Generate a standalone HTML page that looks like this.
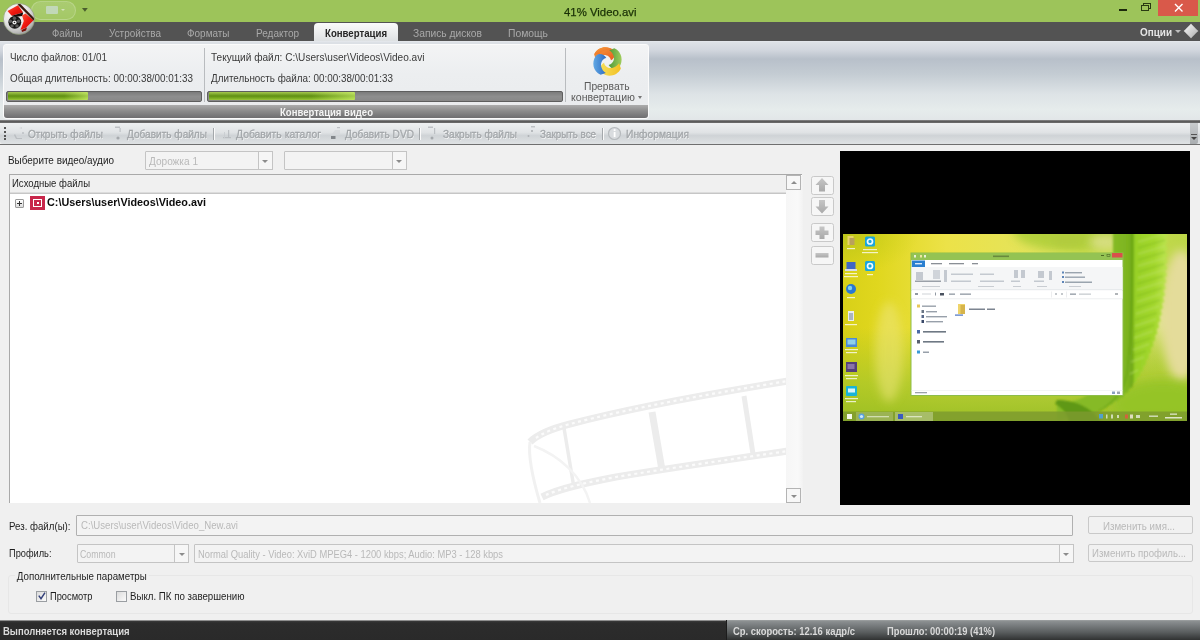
<!DOCTYPE html>
<html lang="ru">
<head>
<meta charset="utf-8">
<title>41% Video.avi</title>
<style>
*{box-sizing:border-box;margin:0;padding:0}
html,body{width:1200px;height:640px;overflow:hidden;background:#f0f0f0}
body{position:relative;font-family:"Liberation Sans",sans-serif;font-size:11px;color:#222}
.a{position:absolute}
.t{position:absolute;white-space:nowrap;transform-origin:0 50%;line-height:14px;height:14px;font-size:11px}
.b{font-weight:bold}
/* title */
#title{left:0;top:0;width:1200px;height:21.5px;z-index:0;background:#9dc45a}
#tabs{left:0;top:21px;width:1200px;height:20px;background:#535353}
.tab{color:#a9a9a9}
#atab{left:314px;top:23px;width:84px;height:19px;border-radius:4px 4px 0 0;background:linear-gradient(#fafafa,#e9ebec 60%,#dcdfe1)}
/* ribbon */
#ribbon{left:0;top:41px;width:1200px;height:79px;background:linear-gradient(#e6e9ed 0,#dde1e6 1.5px,#d2d7de 9px,#b8c0ca 18px,#c4ccd3 33px,#dde3e6 53px,#e6ecec 69px,#e2e6e8 79px)}
#rgroup{left:3px;top:44px;width:646px;height:75px;border:1px solid #fbfbfb;border-radius:3px;background:linear-gradient(#f3f4f5,#eceef0 40%,#e9ebed)}
#rcap{left:4px;top:105px;width:644px;height:13px;border-radius:0 0 3px 3px;background:linear-gradient(#adadad,#8c8c8c 45%,#6e6e70)}
.vsep{width:1px;background:#b9bcbf}
.pbar{height:11px;border:1px solid #5e5e5e;border-radius:2px;background:linear-gradient(#7c7c7c,#8e8e8e 50%,#888)}
.pfill{top:92px;height:8px;border-radius:1px;background:linear-gradient(90deg,rgba(255,255,255,0) 70%,rgba(220,255,120,.55) 100%),linear-gradient(#a6c84e,#5f8f12 50%,#7fae24 80%,#9cc63c)}
#rline{left:0;top:120px;width:1200px;height:3px;background:linear-gradient(#8a8a8a,#5c5c5c 50%,#6e6e6e)}
/* toolbar */
#tbar{left:0;top:123px;width:1200px;height:21px;background:linear-gradient(#eef0f1,#e0e3e5 45%,#cfd3d6 60%,#dfe2e4);border-radius:3px 0 0 3px}
#tline{left:0;top:144px;width:1200px;height:1px;background:#6f6f6f}
.tb{color:#a3a7aa;text-shadow:.5px 1px 0 rgba(255,255,255,.9);-webkit-text-stroke:.35px #a3a7aa}
.tsep{top:128px;width:2px;height:12px;background:linear-gradient(90deg,#a4a8ab 50%,#fafafa 50%)}
/* main */
.lbl{color:#1e1e1e}
.dis{color:#b9b9b9}
.combo{height:18px;border:1px solid #c4c4c4;background:#f3f3f3;border-radius:1px}
.cbtn{width:15px;height:18px;border:1px solid #c4c4c4;background:#f6f6f6}
.arr{width:0;height:0;border-left:3px solid transparent;border-right:3px solid transparent;border-top:3px solid #8c8c8c}
#list{left:9px;top:174px;width:793px;height:328.5px;border:1px solid #a9a9a9;border-right:none;border-bottom:none;background:#fff}
#lhead{left:10px;top:175px;width:776px;height:19px;background:linear-gradient(#f0f0f0 17px,#dcdcdc 17px,#dcdcdc 17.5px,#c6c6c6 17.5px)}
#sbar{left:785.5px;top:176px;width:17px;height:326.5px;background:linear-gradient(90deg,#f6f6f6,#f9f9f9 70%,#f2f2f2)}
.sbtn{left:785.5px;width:15.5px;height:15px;border:1px solid #b4b4b4;background:#f7f7f7}
.sq{left:811px;width:22.5px;height:19px;border:1px solid #c9c9c9;border-radius:2.5px;background:#f6f6f6}
#prev{left:840px;top:151px;width:350px;height:354px;background:#000}
.btn{height:18px;border:1px solid #c9c9c9;border-radius:2px;background:#f1f1f1}
.chk{width:11px;height:11px;border:1px solid #9a9ea2;background:linear-gradient(135deg,#dcdcdc,#fafafa)}
/* status */
#status{left:0;top:620px;width:1200px;height:20px;background:linear-gradient(#8e8e8e 0,#8e8e8e 1px,#3a3a3a 1px,#2c2c2c 3px,#2a2a2a)}
#status2{left:726px;top:620px;width:474px;height:20px;background:linear-gradient(#a4a7a8 0,#8d9192 1px,#7a7e80 5px,#5b5f60 12px,#303232 20px);border-left:1px solid #1c1c1c}
.st{color:#dadada;font-weight:bold}
</style>
</head>
<body>
<div class="a" id="tabs"></div>
<div class="a" id="title"></div>
<span class="t" style="left:564px;top:4.6px;font-size:11.6px;color:#1a3006;-webkit-text-stroke:.25px #1a3006;transform:scaleX(0.9808)">41% Video.avi</span>
<div class="a" style="left:1119px;top:9px;width:8px;height:2px;background:#1c2a0c"></div>
<div class="a" style="left:1143px;top:3px;width:7.5px;height:6px;border:1px solid #2a3b12;border-top-width:1.5px"></div>
<div class="a" style="left:1141px;top:5px;width:7.5px;height:6px;border:1px solid #2a3b12;border-top-width:1.5px;background:#9dc45a"></div>
<div class="a" style="left:1158px;top:0;width:40px;height:16px;background:#d9594a"></div>
<svg class="a" style="left:1173px;top:2px" width="12" height="12" viewBox="0 0 12 12"><path d="M2 2 L9.5 9.5 M9.500 2 L2 9.500" stroke="#fff" stroke-width="1.400" fill="none"/></svg>
<div class="a" style="left:31px;top:1px;width:45px;height:19px;border-radius:9.5px;border:1px solid rgba(255,255,255,.2);background:linear-gradient(rgba(255,255,255,.14),rgba(255,255,255,.08))"></div>
<div class="a" style="left:46px;top:6px;width:12px;height:8px;background:rgba(215,228,245,.55);border-radius:1px"></div>
<div class="a arr" style="left:61px;top:9px;border-top-color:rgba(230,240,220,.7);border-width:2px 2px 0 2px"></div>
<svg class="a" style="left:81px;top:7px" width="8" height="6" viewBox="0 0 8 6"><path d="M1 1 h5.800 l-2.900 3.800z" fill="#4a5e2e"/></svg>
<span class="t tab" style="left:52px;top:26px;transform:scaleX(0.8726)">Файлы</span>
<span class="t tab" style="left:109px;top:26px;transform:scaleX(0.9036)">Устройства</span>
<span class="t tab" style="left:187px;top:26px;transform:scaleX(0.9046)">Форматы</span>
<span class="t tab" style="left:255.5px;top:26px;transform:scaleX(0.9080)">Редактор</span>
<div class="a" id="atab"></div>
<span class="t b" style="left:325px;top:26px;color:#262626;transform:scaleX(0.8752)">Конвертация</span>
<span class="t tab" style="left:413px;top:26px;transform:scaleX(0.9309)">Запись дисков</span>
<span class="t tab" style="left:507.5px;top:26px;transform:scaleX(0.9412)">Помощь</span>
<span class="t b" style="left:1140px;top:25px;color:#e6e6e6;transform:scaleX(0.9014)">Опции</span>
<div class="a arr" style="left:1175px;top:30px;border-top-color:#bdbdbd;border-left-width:3px;border-right-width:3px"></div>
<svg class="a" style="left:1183px;top:23px" width="16" height="16" viewBox="0 0 16 16"><defs><linearGradient id="dg" x1="0" y1="0" x2="1" y2="1"><stop offset="0" stop-color="#fff"/><stop offset="1" stop-color="#a8a8a8"/></linearGradient></defs><path d="M8 .8 L15.2 8 L8 15.2 L.8 8Z" fill="url(#dg)"/><path d="M8 .8 L8 15.2 M.8 8 L15.2 8" stroke="#d0d0d0" stroke-width=".6" opacity=".6"/></svg>
<div class="a" id="ribbon"></div>
<div class="a" id="rgroup"></div>
<div class="a" id="rcap"></div>
<div class="a" id="rline"></div>
<span class="t" style="left:10px;top:50px;color:#3a3a3a;transform:scaleX(0.8969)">Число файлов: 01/01</span>
<span class="t" style="left:10px;top:71px;color:#3a3a3a;transform:scaleX(0.8966)">Общая длительность: 00:00:38/00:01:33</span>
<div class="a pbar" style="left:6px;top:91px;width:196px"></div>
<div class="a pfill" style="left:7.5px;width:80px"></div>
<div class="a vsep" style="left:204px;top:48px;height:54px"></div>
<span class="t" style="left:211px;top:50px;color:#3a3a3a;transform:scaleX(0.9174)">Текущий файл: C:\Users\user\Videos\Video.avi</span>
<span class="t" style="left:211px;top:71px;color:#3a3a3a;transform:scaleX(0.8965)">Длительность файла: 00:00:38/00:01:33</span>
<div class="a pbar" style="left:207px;top:91px;width:356px"></div>
<div class="a pfill" style="left:208.5px;width:146px"></div>
<div class="a vsep" style="left:565px;top:48px;height:54px"></div>
<span class="t b" style="left:279.5px;top:104.5px;color:#f4f4f4;transform:scaleX(0.8673)">Конвертация видео</span>
<span class="t" style="left:584px;top:79px;color:#5a5a5a;transform:scaleX(0.9357)">Прервать</span>
<span class="t" style="left:571px;top:89.5px;color:#5a5a5a;transform:scaleX(0.9613)">конвертацию</span>
<div class="a arr" style="left:638px;top:96px;border-top-color:#777;border-left-width:2.5px;border-right-width:2.5px"></div>
<svg class="a" style="left:592px;top:47px" width="31" height="30" viewBox="0 0 31 30">
<defs>
<linearGradient id="c1" x1="0" y1="0" x2="1" y2="1"><stop offset="0" stop-color="#f6a03c"/><stop offset="1" stop-color="#e85a20"/></linearGradient>
<linearGradient id="c2" x1="0" y1="0" x2="0" y2="1"><stop offset="0" stop-color="#a0cc5c"/><stop offset="1" stop-color="#4e9a38"/></linearGradient>
<linearGradient id="c3" x1="0" y1="0" x2="1" y2="0"><stop offset="0" stop-color="#f2c024"/><stop offset="1" stop-color="#f6de58"/></linearGradient>
<linearGradient id="c4" x1="0" y1="0" x2="0" y2="1"><stop offset="0" stop-color="#62a8e4"/><stop offset="1" stop-color="#2c6cc4"/></linearGradient>
<filter id="cb" x="-10%" y="-10%" width="120%" height="120%"><feGaussianBlur stdDeviation=".35"/></filter>
</defs>
<g filter="url(#cb)" transform="translate(15.5 14.5) scale(1.16) translate(-15.5 -14.5)">
<path id="arm" d="M4 8.500 C7 2 15 .5 20.500 4.500 C23 7 22 11.500 18.500 13.500 C18 10.500 15 8.500 11.500 9 C9 9.500 7 11 5.500 13 Z" fill="url(#c1)"/>
<path d="M4 8.500 C7 2 15 .5 20.500 4.500 C23 7 22 11.500 18.500 13.500 C18 10.500 15 8.500 11.500 9 C9 9.500 7 11 5.500 13 Z" fill="url(#c2)" transform="rotate(90 15.500 14.500)"/>
<path d="M4 8.500 C7 2 15 .5 20.500 4.500 C23 7 22 11.500 18.500 13.500 C18 10.500 15 8.500 11.500 9 C9 9.500 7 11 5.500 13 Z" fill="url(#c3)" transform="rotate(180 15.500 14.500)"/>
<path d="M4 8.500 C7 2 15 .5 20.500 4.500 C23 7 22 11.500 18.500 13.500 C18 10.500 15 8.500 11.500 9 C9 9.500 7 11 5.500 13 Z" fill="url(#c4)" transform="rotate(270 15.500 14.500)"/>
<path d="M4 8.500 C7 2 15 .5 20.500 4.500 C19 4 13 3 8.500 8 Z" fill="url(#c1)"/>
</g>
</svg>

<svg class="a" style="left:2px;top:2px" width="34" height="34" viewBox="0 0 34 34">
<defs>
<radialGradient id="ab" cx=".38" cy=".3" r=".75"><stop offset="0" stop-color="#ffffff"/><stop offset=".55" stop-color="#e6e6e6"/><stop offset=".85" stop-color="#b9b9b9"/><stop offset="1" stop-color="#8e8e8e"/></radialGradient>
<linearGradient id="ar" x1="0" y1="0" x2="1" y2="1"><stop offset="0" stop-color="#ff5a3c"/><stop offset=".5" stop-color="#f01810"/><stop offset="1" stop-color="#c80c08"/></linearGradient>
<clipPath id="ac"><circle cx="17" cy="17" r="15"/></clipPath>
</defs>
<circle cx="17" cy="17" r="15.600" fill="url(#ab)" stroke="#8a9a70" stroke-width=".6"/>
<g clip-path="url(#ac)">
<path d="M5.500 9 L16 3.200 L21.200 10.500 L9.700 13.800Z" fill="url(#ar)"/>
<path d="M9.700 13.800 L21.200 10.500 L20.300 14 L13 15Z" fill="#1a0806"/>
<path d="M20 13.600 L23.500 11.500 L31.500 18.300 L24 25.800 L18.400 28 L21.800 19Z" fill="url(#ar)"/>
<path d="M15.500 2.500 L18 1.500 L33 17 L31.500 18.500Z" fill="#3a1a10"/>
<path d="M19.500 28 L25 25.500 L24 28.500 L20 30Z" fill="#7a1008"/>
</g>
<circle cx="12.800" cy="20.300" r="6.400" fill="#141414"/>
<g fill="#5a5a5a"><circle cx="12.500" cy="16.300" r="1.700"/><circle cx="16.500" cy="19.200" r="1.700"/><circle cx="15" cy="23.900" r="1.700"/><circle cx="10" cy="23.900" r="1.700"/><circle cx="8.500" cy="19.200" r="1.700"/></g>
<circle cx="12.500" cy="20.500" r="2.100" fill="#f2f2f2"/><circle cx="12.500" cy="20.500" r=".8" fill="#222"/>
</svg>

<div class="a" id="tbar"></div>
<div class="a" id="tline"></div>
<div class="a" style="left:4px;top:127px;width:2px;height:2px;background:#555;box-shadow:0 4px 0 #555,0 8px 0 #555,0 11px 0 #555"></div>
<span class="t tb" style="left:28px;top:126.6px;transform:scaleX(0.9157)">Открыть файлы</span>
<span class="t tb" style="left:127px;top:126.6px;transform:scaleX(0.9162)">Добавить файлы</span>
<div class="a tsep" style="left:213px"></div>
<span class="t tb" style="left:236px;top:126.6px;transform:scaleX(0.9412)">Добавить каталог</span>
<span class="t tb" style="left:344.5px;top:126.6px;transform:scaleX(0.9212)">Добавить DVD</span>
<div class="a tsep" style="left:419px"></div>
<span class="t tb" style="left:442.5px;top:126.6px;transform:scaleX(0.9129)">Закрыть файлы</span>
<span class="t tb" style="left:540px;top:126.6px;transform:scaleX(0.8922)">Закрыть все</span>
<div class="a tsep" style="left:602px"></div>
<span class="t tb" style="left:625.5px;top:126.6px;transform:scaleX(0.9353)">Информация</span>
<svg class="a" style="left:0;top:123px" width="700" height="21" viewBox="0 0 700 21">
<g fill="#b4b8bc" opacity=".8">
<path d="M14 12 L16 16 L22 16 L22 15 L17 15 L15 11Z"/><circle cx="23" cy="10" r="1"/><path d="M19 5 L22 4 L22 6Z" fill="#d0d3d6"/>
<rect x="115" y="3.500" width="5" height="1.500" /><circle cx="118" cy="15" r="1.600" fill="#9a9ea2"/><rect x="119.500" y="5" width="1.200" height="4"/>
<rect x="223" y="14" width="8" height="1.200"/><rect x="228" y="7" width="1.200" height="8"/><rect x="224" y="9" width="1" height="6" fill="#c8ccd0"/>
<path d="M331 12 L335 7 L340 7 L340 12Z" fill="#d6d9dc"/><rect x="331" y="13" width="4.500" height="3" fill="#6f7378"/><rect x="337" y="4" width="3" height="1.200"/>
<rect x="428" y="3.500" width="5" height="1.500"/><circle cx="432" cy="15" r="1.500" fill="#9a9ea2"/><rect x="434" y="5" width="1.200" height="6"/>
<rect x="531" y="3" width="4" height="1.500"/><circle cx="532" cy="8" r="1" fill="#9a9ea2"/><circle cx="528.500" cy="13" r="1" fill="#a4a8ac"/>
</g>
<circle cx="614.500" cy="10.500" r="6" fill="#d9dcdf" stroke="#b6babd" stroke-width="1.200"/>
<rect x="613.700" y="9" width="1.800" height="5" fill="#fff"/><rect x="613.700" y="6.200" width="1.800" height="1.800" fill="#fff"/>
<path d="M1191 12 h6 l-3 3z" fill="#666"/>
</svg>
<div class="a" style="left:1190px;top:123px;width:8px;height:21px;background:linear-gradient(#c9ccce,#a9adb0);border-radius:0 0 2px 0"></div>
<div class="a" style="left:1191px;top:134px;width:6px;height:1px;background:#555"></div>
<div class="a arr" style="left:1191px;top:137px;border-top-color:#444"></div>

<span class="t lbl" style="left:8px;top:152.5px;transform:scaleX(0.9028)">Выберите видео/аудио</span>
<div class="a combo" style="left:145px;top:151px;width:127px;height:19px"></div>
<div class="a cbtn" style="left:258px;top:151px;height:19px"></div>
<div class="a arr" style="left:262px;top:159.5px"></div>
<span class="t dis" style="left:149px;top:153.5px;transform:scaleX(0.9156)">Дорожка 1</span>
<div class="a combo" style="left:284px;top:151px;width:123px;height:19px"></div>
<div class="a cbtn" style="left:392px;top:151px;height:19px"></div>
<div class="a arr" style="left:396px;top:159.5px"></div>
<div class="a" id="list"></div>
<svg class="a" style="left:520px;top:376px" width="266" height="127" viewBox="0 0 266 127">
<defs><filter id="fb" x="-5%" y="-5%" width="110%" height="110%"><feGaussianBlur stdDeviation=".7"/></filter></defs>
<g filter="url(#fb)" fill="none" stroke="#ececec">
<path d="M10 66 C18 58 34 52 50 48 C110 32 200 16 268 5" stroke-width="7"/>
<path d="M22 121 C40 112 70 106 96 101 C150 92 220 82 268 75" stroke-width="7"/>
<path d="M44 52 L54 112" stroke-width="3.500"/>
<path d="M132 36 L142 94" stroke-width="7"/>
<path d="M224 20 L233 78" stroke-width="5"/>
<path d="M10 66 C8 80 12 100 20 127" stroke-width="3" stroke="#f1f1f1"/>
<path d="M14 70 C40 80 62 100 70 127" stroke-width="2.500" stroke="#f3f3f3"/>
</g>
<g stroke="#fbfbfb" stroke-width="2.200" stroke-dasharray="3 3.500" fill="none">
<path d="M16 62 C24 56 36 52 50 48 C110 32 200 16 268 5"/>
<path d="M26 119 C44 111 70 106 96 101 C150 92 220 82 268 75"/>
</g>
</svg>

<div class="a" id="lhead"></div>
<div class="a" id="sbar"></div>
<div class="a sbtn" style="top:175px"></div>
<div class="a arr" style="left:790.5px;top:181px;border-top:none;border-bottom:3px solid #8c8c8c"></div>
<div class="a sbtn" style="top:488px"></div>
<div class="a arr" style="left:790.5px;top:494.5px"></div>
<span class="t lbl" style="left:12px;top:176px;transform:scaleX(0.8679)">Исходные файлы</span>
<div class="a" style="left:14.5px;top:199px;width:9px;height:9px;border:1px solid #9a9a9a;border-radius:1px;background:linear-gradient(#fff,#dcdcdc)"></div>
<div class="a" style="left:16.5px;top:203px;width:5px;height:1px;background:#333"></div>
<div class="a" style="left:18.5px;top:201px;width:1px;height:5px;background:#333"></div>
<div class="a" style="left:30px;top:196px;width:15px;height:14px;background:#c8274b"></div>
<div class="a" style="left:33px;top:199px;width:9px;height:8px;border:1px solid #fff"></div>
<div class="a" style="left:36.5px;top:202px;width:2px;height:2px;background:#fff"></div>
<span class="t b" style="left:46.5px;top:195px;font-size:11.5px;color:#0c0c0c;transform:scaleX(0.9410)">C:\Users\user\Videos\Video.avi</span>
<div class="a sq" style="top:175.5px"></div>
<div class="a sq" style="top:197.3px"></div>
<div class="a sq" style="top:223px"></div>
<div class="a sq" style="top:245.5px"></div>
<svg class="a" style="left:811px;top:175px" width="23" height="91" viewBox="0 0 23 91">
<defs><linearGradient id="sg" x1="0" y1="0" x2="0" y2="1"><stop offset="0" stop-color="#c6c6c6"/><stop offset="1" stop-color="#a9a9a9"/></linearGradient></defs>
<path d="M11 3 L17.500 10 L14 10 L14 16.500 L8 16.500 L8 10 L4.500 10Z" fill="url(#sg)"/>
<path d="M11 38.500 L17.500 31.500 L14 31.500 L14 25 L8 25 L8 31.500 L4.500 31.500Z" fill="url(#sg)"/>
<path d="M8.500 51.500 L13.500 51.500 L13.500 55.500 L17.500 55.500 L17.500 60 L13.500 60 L13.500 64 L8.500 64 L8.500 60 L4.500 60 L4.500 55.500 L8.500 55.500Z" fill="url(#sg)"/>
<rect x="4.500" y="78" width="13" height="4.500" fill="url(#sg)"/>
</svg>

<div class="a" id="prev"></div>
<svg class="a" style="left:843px;top:234px" width="344" height="187" viewBox="0 0 344 187">
<defs>
<linearGradient id="wp1" x1="0" y1="0" x2="1" y2="0"><stop offset="0" stop-color="#d8d018"/><stop offset=".1" stop-color="#e0d71e"/><stop offset=".3" stop-color="#ece248"/><stop offset=".6" stop-color="#e2e460"/><stop offset=".8" stop-color="#c8dc50"/><stop offset="1" stop-color="#bcd648"/></linearGradient>
<linearGradient id="wp2" x1="0" y1="0" x2="0" y2="1"><stop offset="0" stop-color="#a4c428" stop-opacity="0"/><stop offset=".5" stop-color="#a4c428" stop-opacity="0"/><stop offset=".8" stop-color="#a6c62a" stop-opacity=".75"/><stop offset="1" stop-color="#98be24" stop-opacity=".95"/></linearGradient>
<radialGradient id="wp3" cx="0" cy="0" r=".22"><stop offset="0" stop-color="#bcc41c"/><stop offset="1" stop-color="#c8d018" stop-opacity="0"/></radialGradient>
<radialGradient id="wp4" cx=".97" cy=".45" r=".3"><stop offset="0" stop-color="#e8e8a0"/><stop offset="1" stop-color="#d8e070" stop-opacity="0"/></radialGradient>
<linearGradient id="lf" gradientUnits="userSpaceOnUse" x1="270" y1="0" x2="322" y2="0"><stop offset="0" stop-color="#86ba26"/><stop offset=".3" stop-color="#7cb41e"/><stop offset=".37" stop-color="#6ea618"/><stop offset=".42" stop-color="#98d026"/><stop offset=".8" stop-color="#a4d82e"/><stop offset="1" stop-color="#b8e24a"/></linearGradient>
<filter id="bl1" x="-20%" y="-20%" width="140%" height="140%"><feGaussianBlur stdDeviation="1.2"/></filter>
<filter id="bl3" x="-20%" y="-20%" width="140%" height="140%"><feGaussianBlur stdDeviation="5"/></filter>
<clipPath id="vf"><rect width="344" height="187"/></clipPath>
</defs>
<g clip-path="url(#vf)">
<rect width="344" height="187" fill="url(#wp1)"/>
<rect width="344" height="187" fill="url(#wp3)"/>
<rect width="344" height="187" fill="url(#wp4)"/>
<ellipse cx="230" cy="-4" rx="60" ry="22" fill="#a8cc34" filter="url(#bl3)" opacity=".8"/>
<rect width="344" height="187" fill="url(#wp2)"/>
<ellipse cx="46" cy="118" rx="14" ry="50" fill="#eee67c" filter="url(#bl3)" opacity=".55"/>
<ellipse cx="338" cy="82" rx="20" ry="66" fill="#e4dc9a" filter="url(#bl3)"/><ellipse cx="262" cy="8" rx="16" ry="8" fill="#e2e294" filter="url(#bl3)" opacity=".8"/><ellipse cx="225" cy="6" rx="18" ry="6" fill="#b0c440" filter="url(#bl3)" opacity=".5"/>
<ellipse cx="320" cy="170" rx="50" ry="24" fill="#94c428" filter="url(#bl3)" opacity=".9"/>
<g filter="url(#bl1)">
<path d="M270 -3 L322 -3 L324.7 2.2 L322.1 3.6 L324.8 8.8 L322.3 10.1 L324.9 15.3 L322.4 16.7 L324.9 21.9 L322.4 23.2 L324.6 28.6 L322.1 29.8 L324.4 35.1 L321.9 36.3 L324.0 41.7 L321.6 42.9 L323.4 48.3 L321.0 49.4 L322.8 54.9 L320.4 56.0 L322.1 61.4 L319.7 62.5 L321.2 68.0 L318.8 69.0 L320.0 74.5 L317.6 75.4 L318.8 81.0 L316.5 81.9 L317.6 87.5 L315.3 88.3 L316.0 93.9 L313.6 94.7 L314.3 100.3 L312.0 101.1 L312.3 106.7 L310.1 107.3 L310.3 112.9 L308.0 113.5 L308.0 119.1 L305.8 119.7 L305.5 125.3 L303.3 125.8 L302.8 131.3 L300.6 131.8 L299.9 137.3 L297.7 137.6 L296.5 143.0 L294.3 143.3 L292.9 148.6 L290.7 148.8 L289.0 154.0 L286.9 154.1 L284.4 159.0 L282.3 158.8 L279.6 163.5 L277.6 163.3 L274.1 167.5 L272.1 166.9 L268.6 171.1 L266.6 170.6 L262.5 174.1 L260.7 173.3 L256.5 176.8 L254.7 175.9 L250.4 179.2 L248.6 178.4 L243.9 181.2 L242.3 180.2 L237.6 182.9 L236.0 182.0 L214 187 L214 170 C236 168 254 160 262 140 C270 110 270 50 270 -3 Z" fill="url(#lf)"/>
<path d="M214 166 C230 166 248 172 258 188 L226 188 C224 180 220 174 212 170Z" fill="#5e9812"/>
<path d="M289.500 -3 C290 40 289 90 284 140 C280 158 268 172 250 180" stroke="#5c9c10" stroke-width="1.400" fill="none" opacity=".6"/>
<g stroke="#c4e670" stroke-width="1.300" opacity=".6" fill="none">
<path d="M295 8 L321 0M295 20 L322 12M295 32 L322 24M295 44 L321 36M294 56 L320 48M294 68 L318 60M293 80 L316 72M292 92 L313 85M291 104 L310 97M290 116 L306 110M288 128 L301 123M287 140 L295 136"/>
</g>
<g stroke="#6aa814" stroke-width="1" opacity=".5" fill="none">
<path d="M295 14 L322 6M295 26 L322 18M295 38 L321 30M294 50 L320 42M294 62 L319 54M293 74 L317 66M292 86 L314 79M291 98 L311 91M290 110 L308 104M289 122 L303 117"/>
</g>
</g>
<g>
<rect x="4.500" y="2" width="6" height="9" fill="#e8d46a"/><rect x="6.500" y="4" width="5" height="7" fill="#b9a15c"/>
<rect x="22" y="2.500" width="10" height="10" rx="1.500" fill="#19a6dc"/><circle cx="27" cy="7.500" r="2.500" fill="none" stroke="#f0fafe" stroke-width="1.700"/>
<rect x="22" y="27" width="10" height="10" rx="1.500" fill="#19a6dc"/><circle cx="27" cy="32" r="2.500" fill="none" stroke="#f0fafe" stroke-width="1.700"/>
<rect x="3.500" y="28" width="9" height="7" fill="#3f66c4"/><rect x="2" y="35" width="12" height="2" fill="#d8dce8"/>
<circle cx="8" cy="55" r="5" fill="#2a78d2"/><circle cx="7" cy="54" r="2.200" fill="#7fd0f0"/>
<rect x="5" y="77" width="6" height="10" fill="#e9ecef"/><rect x="6" y="79" width="4" height="7" fill="#aab4c0"/>
<rect x="3" y="104" width="11" height="9" fill="#4a8ad6"/><rect x="4.500" y="105.500" width="8" height="5" fill="#8fd0ea"/>
<rect x="3" y="128" width="11" height="10" fill="#54407a"/><rect x="4.500" y="130" width="7" height="5" fill="#8a74a8"/>
<rect x="3" y="152" width="11" height="10" rx="1" fill="#18b4d8"/><rect x="5" y="154.500" width="7" height="4" fill="#d8f4fa"/>
<g fill="#fff" opacity=".75"><rect x="4" y="14" width="8" height="1.200"/><rect x="20" y="15" width="14" height="1.200"/><rect x="19" y="18" width="16" height="1.200"/><rect x="2" y="39" width="12" height="1.200"/><rect x="1" y="42" width="14" height="1.200"/><rect x="24" y="40" width="6" height="1.200"/><rect x="4" y="63" width="8" height="1.200"/><rect x="2" y="90" width="12" height="1.200"/><rect x="2" y="115" width="13" height="1.200"/><rect x="3" y="118" width="11" height="1.200"/><rect x="2" y="141" width="13" height="1.200"/><rect x="3" y="144" width="11" height="1.200"/><rect x="2" y="164" width="13" height="1.200"/><rect x="3" y="167" width="10" height="1.200"/></g>
</g>
<rect x="67.500" y="18.500" width="213" height="143.500" fill="#8dbd49"/>
<rect x="68.500" y="26" width="211" height="135" fill="#ffffff"/>
<rect x="68.500" y="19" width="211" height="7" fill="#94c353"/>
<rect x="269" y="19" width="10.500" height="4.500" fill="#d9504a"/>
<rect x="258" y="21" width="3" height="1" fill="#4d6a24"/><rect x="264" y="20.500" width="3" height="2" fill="none" stroke="#4d6a24" stroke-width=".6"/>
<rect x="150" y="21.500" width="16" height="1.600" fill="#5d7a38" opacity=".8"/>
<rect x="71" y="21" width="2" height="2.500" fill="#e8f0d8"/><rect x="77" y="21" width="2" height="2.500" fill="#f0e8a0"/><rect x="81" y="21" width="2" height="2.500" fill="#e8f0d8"/>
<rect x="69" y="26.500" width="13" height="6.500" fill="#2a7fd0"/>
<rect x="72" y="29" width="7" height="1.400" fill="#d8e8f8"/>
<g fill="#8a8f96"><rect x="88" y="29" width="11" height="1.300"/><rect x="106" y="29" width="15" height="1.300"/><rect x="129" y="29" width="6" height="1.300"/></g>
<rect x="68.500" y="33" width="211" height="23" fill="#f5f6f7"/>
<rect x="68.500" y="55.500" width="211" height=".8" fill="#dcdfe3"/>
<g fill="#c4c9d0"><rect x="73" y="38" width="7" height="8"/><rect x="90" y="36" width="7" height="9" fill="#d0d4da"/><rect x="101" y="36" width="3" height="12"/><rect x="108" y="39.500" width="22" height="1.500"/><rect x="108" y="46.500" width="20" height="1.500"/><rect x="137" y="39.500" width="14" height="1.500"/><rect x="137" y="46.500" width="24" height="1.500"/><rect x="171" y="36" width="4" height="8"/><rect x="178" y="36" width="4" height="8"/><rect x="168" y="46.500" width="9" height="1.500"/><rect x="195" y="37" width="6" height="7"/><rect x="206" y="37" width="3" height="9"/><rect x="191" y="46.500" width="10" height="1.500"/><rect x="72" y="46.500" width="26" height="1.500" fill="#9aa0a8"/></g>
<g fill="#9aa4ae"><rect x="222" y="38" width="17" height="1.400"/><rect x="222" y="42.500" width="20" height="1.400"/><rect x="222" y="47.500" width="27" height="1.500"/></g>
<g fill="#5f86b8"><rect x="219" y="37.500" width="2" height="2"/><rect x="219" y="42" width="2" height="2"/><rect x="219" y="47" width="2" height="2"/></g>
<g fill="#c9cdd2"><rect x="79" y="52" width="18" height="1"/><rect x="135" y="52" width="16" height="1"/><rect x="170" y="52" width="8" height="1"/><rect x="194" y="52" width="10" height="1"/><rect x="226" y="52" width="12" height="1"/></g>
<rect x="68.500" y="56.500" width="211" height="8" fill="#fff"/>
<g fill="#9098a2"><rect x="72" y="59" width="3" height="2"/><rect x="79" y="59.500" width="9" height="1" fill="#d0d4d8"/><rect x="92" y="58.500" width="1" height="3"/><rect x="97" y="59" width="4" height="2.500" fill="#4a5260"/><rect x="106" y="59.500" width="6" height="1.300"/><rect x="117" y="59.500" width="11" height="1.300"/><rect x="212" y="59" width="2" height="2" fill="#c4c8cc"/><rect x="218" y="59" width="2" height="2" fill="#c4c8cc"/><rect x="227" y="59.500" width="6" height="1.300"/><rect x="236" y="59.500" width="12" height="1.300" fill="#c8ccd0"/><rect x="272" y="59" width="3" height="2" fill="#b0b4b8"/></g>
<rect x="208" y="57.500" width=".6" height="6" fill="#e0e2e5"/><rect x="223" y="57.500" width=".6" height="6" fill="#e0e2e5"/>
<rect x="68.500" y="64.500" width="211" height=".7" fill="#e6e8ea"/>
<g fill="#98a0aa"><rect x="79" y="71.500" width="14" height="1.400"/><rect x="83" y="77" width="11" height="1.400"/><rect x="83" y="82" width="21" height="1.400"/><rect x="83" y="87" width="17" height="1.400"/><rect x="80" y="97" width="23" height="1.600" fill="#6e7884"/><rect x="80" y="107" width="21" height="1.600" fill="#6e7884"/><rect x="80" y="117.500" width="6" height="1.500"/></g>
<g><rect x="74" y="70.500" width="3" height="3" fill="#e8c85a"/><rect x="78.500" y="76" width="2.500" height="3" fill="#6a7686"/><rect x="78.500" y="81" width="2.500" height="3" fill="#5a6a8a"/><rect x="78.500" y="86" width="2.500" height="3" fill="#3a4a6a"/><rect x="74" y="96" width="3" height="3.500" fill="#4a6aa8"/><rect x="74" y="106" width="3" height="3.500" fill="#586070"/><rect x="74" y="116.500" width="3" height="3" fill="#3a9ad8"/></g>
<rect x="115" y="70" width="7" height="10" fill="#efd46a"/><rect x="117.500" y="71" width="4.500" height="9" fill="#d6b44c"/><rect x="112" y="80.500" width="8" height="1.200" fill="#4a72c0"/>
<g fill="#7c8490"><rect x="126" y="74.500" width="16" height="1.500"/><rect x="144" y="74.500" width="8" height="1.500"/></g>
<rect x="68.500" y="156" width="211" height=".6" fill="#eceef0"/>
<rect x="72" y="158" width="12" height="1.300" fill="#9aa2aa"/><rect x="269" y="157.500" width="3" height="2.500" fill="#8aa0c0"/><rect x="274" y="157.500" width="3" height="2.500" fill="#9aa4b0"/>
<rect x="0" y="177.500" width="344" height="9.500" fill="#7c9a2e" opacity=".82"/>
<rect x="4" y="180" width="5" height="5" fill="#f4f8ea"/>
<rect x="13" y="178" width="37" height="9" fill="#a3ba62" opacity=".75"/>
<circle cx="18.500" cy="182.500" r="3" fill="#5aa0e0"/><circle cx="18.500" cy="182.500" r="1.600" fill="#cfe8f8"/>
<rect x="24" y="182" width="22" height="1.300" fill="#dfe8c8" opacity=".8"/>
<rect x="52" y="178" width="38" height="9" fill="#b0c478" opacity=".8"/>
<rect x="55" y="180" width="5" height="5" fill="#3a5ac0"/><rect x="63" y="182" width="16" height="1.300" fill="#e4ecd0" opacity=".85"/>
<g opacity=".85"><rect x="256" y="180" width="4" height="4.500" fill="#4aa0e8"/><rect x="263" y="180.500" width="1.500" height="4" fill="#dfe8d0"/><rect x="268" y="180.500" width="2" height="4" fill="#dfe8d0"/><rect x="274" y="181" width="2" height="3" fill="#dfe8d0"/><rect x="282" y="180.500" width="3" height="4" fill="#e05a40"/><rect x="287" y="180.500" width="3" height="4" fill="#f0e8d8"/><rect x="293" y="181" width="4" height="3" fill="#dfe8d0"/><rect x="306" y="181.500" width="9" height="1.400" fill="#e4ecd8"/><rect x="327" y="179.500" width="7" height="1.300" fill="#eef2e4"/><rect x="322" y="183" width="17" height="1.500" fill="#eef2e4"/></g>
</g>
</svg>

<span class="t lbl" style="left:8.5px;top:518.5px;transform:scaleX(0.8797)">Рез. файл(ы):</span>
<div class="a combo" style="left:76px;top:515px;width:997px;height:21px;border-color:#b0b0b0"></div>
<span class="t dis" style="left:81.3px;top:518px;transform:scaleX(0.8753)">C:\Users\user\Videos\Video_New.avi</span>
<div class="a btn" style="left:1088px;top:516px;width:105px"></div>
<span class="t dis" style="left:1103px;top:518.5px;transform:scaleX(0.8833)">Изменить имя...</span>
<span class="t lbl" style="left:8.5px;top:546px;transform:scaleX(0.8408)">Профиль:</span>
<div class="a combo" style="left:77px;top:544px;width:111px;height:19px"></div>
<div class="a cbtn" style="left:174px;top:544px;height:19px"></div>
<div class="a arr" style="left:178.5px;top:553px"></div>
<span class="t dis" style="left:80px;top:546.5px;transform:scaleX(0.7955)">Common</span>
<div class="a combo" style="left:194px;top:544px;width:879px;height:19px"></div>
<div class="a cbtn" style="left:1058.5px;top:544px;height:19px"></div>
<div class="a arr" style="left:1063px;top:553px"></div>
<span class="t dis" style="left:197.5px;top:546.5px;transform:scaleX(0.8503)">Normal Quality - Video: XviD MPEG4 - 1200 kbps; Audio: MP3 - 128 kbps</span>
<div class="a btn" style="left:1088px;top:543.5px;width:105px"></div>
<span class="t dis" style="left:1092px;top:546px;transform:scaleX(0.8753)">Изменить профиль...</span>
<div class="a" style="left:8px;top:575px;width:1185px;height:39px;border:1px solid #e7e7e7;border-radius:3px"></div>
<span class="t lbl" style="left:15px;top:568.7px;background:#f0f0f0;padding:0 2px;transform:scaleX(0.8854)">Дополнительные параметры</span>
<div class="a chk" style="left:36px;top:590.5px"></div>
<svg class="a" style="left:36px;top:590px" width="12" height="12" viewBox="0 0 12 12"><path d="M2.8 5.6 L5 8.6 L9 2.6" stroke="#33407a" stroke-width="1.5" fill="none"/></svg>
<span class="t lbl" style="left:49.5px;top:589px;transform:scaleX(0.8458)">Просмотр</span>
<div class="a chk" style="left:116px;top:590.5px"></div>
<span class="t lbl" style="left:129.5px;top:589px;transform:scaleX(0.8825)">Выкл. ПК по завершению</span>
<div class="a" id="status"></div>
<div class="a" id="status2"></div>
<span class="t st" style="left:2.5px;top:624px;transform:scaleX(0.8619)">Выполняется конвертация</span>
<span class="t st" style="left:732.5px;top:624px;transform:scaleX(0.8571)">Ср. скорость: 12.16 кадр/с</span>
<span class="t st" style="left:887px;top:624px;transform:scaleX(0.8488)">Прошло: 00:00:19 (41%)</span>
</body>
</html>
